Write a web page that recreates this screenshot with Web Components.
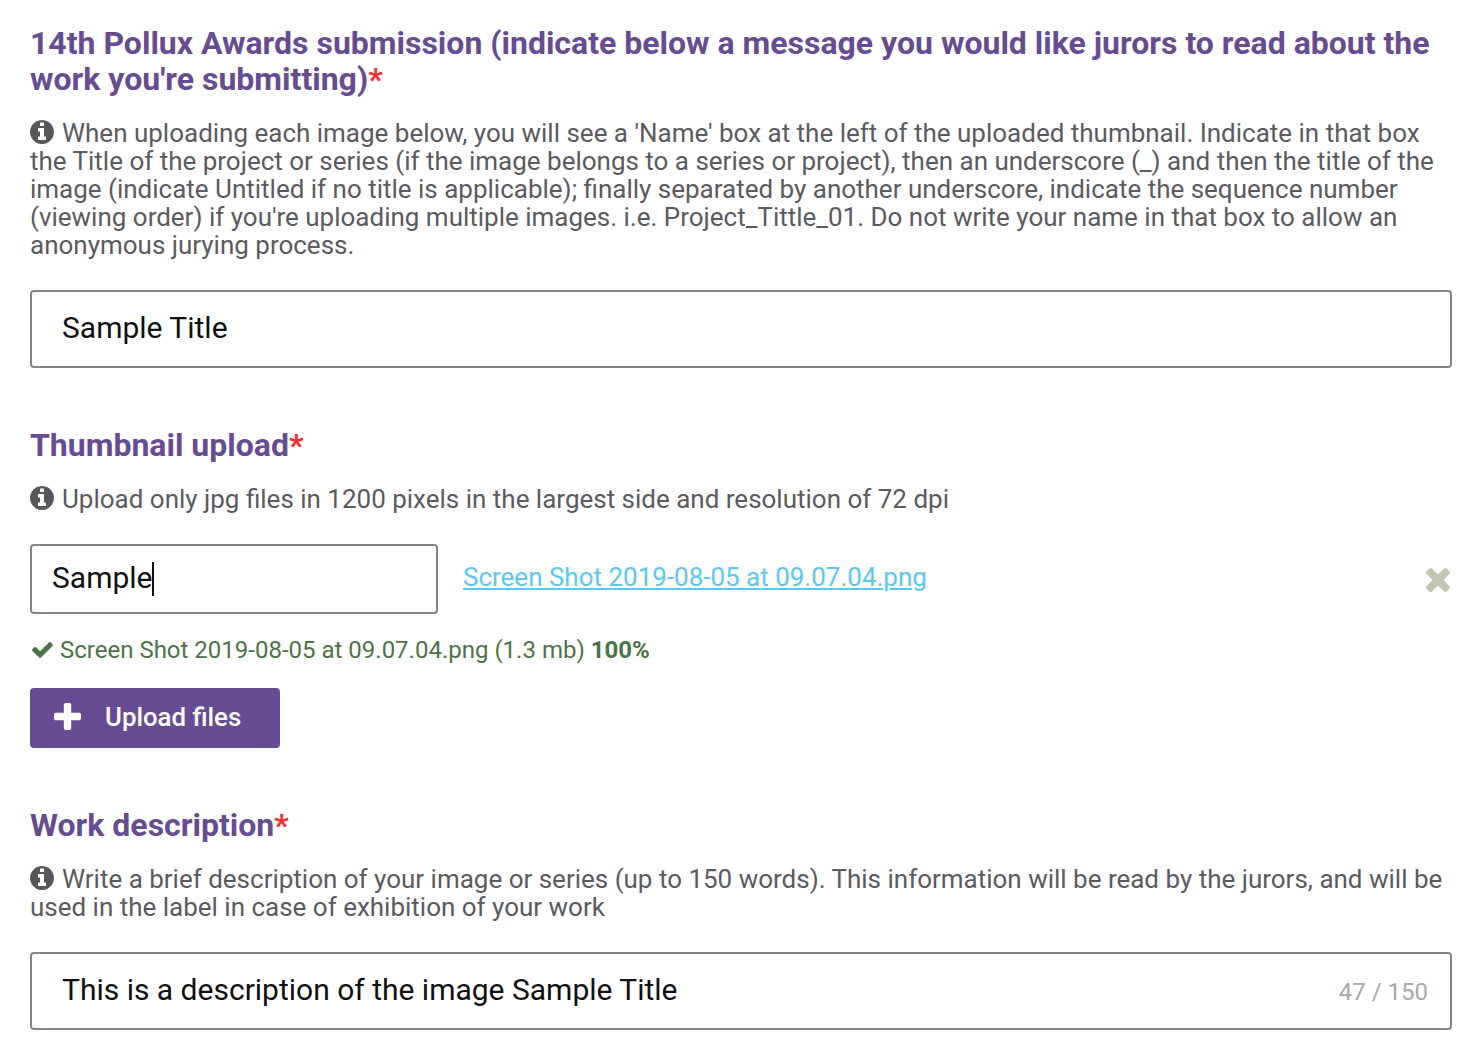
<!DOCTYPE html>
<html lang="en">
<head>
<meta charset="utf-8">
<title>Pollux Awards submission</title>
<style>
  html, body { margin: 0; background: #fff; }
  body { font-family: Roboto, sans-serif; }
  submission-form { padding: 24px 32px 0 30px; }
</style>
</head>
<body>
<template id="field-heading-tpl">
  <style>
    :host { display: block; padding-top: 1px; color: #674c93; font: 700 32px/36px Roboto, sans-serif; }
    .req { color: #f5302e; }
  </style>
  <slot></slot><span class="req">*</span>
</template>

<template id="hint-text-tpl">
  <style>
    :host { display: block; color: #5b5b5f; font: 400 25.99px/28px Roboto, sans-serif; }
    svg { width: 24px; height: 24px; fill: #58585a; vertical-align: -2px; margin-right: 8px; }
  </style>
  <svg viewBox="128 128 1536 1536"><path d="M1152 1376v-160q0-14-9-23t-23-9h-96v-512q0-14-9-23t-23-9h-320q-14 0-23 9t-9 23v160q0 14 9 23t23 9h96v320h-96q-14 0-23 9t-9 23v160q0 14 9 23t23 9h448q14 0 23-9t9-23zm-128-896v-160q0-14-9-23t-23-9h-192q-14 0-23 9t-9 23v160q0 14 9 23t23 9h192q14 0 23-9t9-23zm640 416q0 209-103 385.5t-279.5 279.5-385.5 103-385.5-103-279.5-279.5-103-385.5 103-385.5 279.5-279.5 385.5-103 385.5 103 279.5 279.5 103 385.5z"/></svg><slot></slot>
</template>

<template id="text-box-tpl">
  <style>
    :host { display: flex; align-items: center; justify-content: space-between; box-sizing: border-box; height: 78px; padding: 0 22px 2px 30px; border: 2px solid #808589; border-radius: 4px; background: #fff; color: #111; font: 400 30px/36px Roboto, sans-serif; }
    .count { color: #a9a9a9; font-size: 24px; margin-top: 4px; }
  </style>
  <span><slot></slot></span><span class="count"><slot name="count"></slot></span>
</template>

<template id="file-row-tpl">
  <style>
    :host { display: flex; align-items: center; }
    .name { box-sizing: border-box; flex: 0 0 408px; height: 70px; display: flex; align-items: center; padding: 0 20px 2px; border: 2px solid #808589; border-radius: 4px; color: #111; font: 400 30px/36px Roboto, sans-serif; }
    .caret { width: 2px; height: 34px; background: #111; margin: 2px 0 0 -1px; }
    a { flex: 1; margin-left: 25px; margin-top: -4px; color: #5bc8f2; font: 400 25.99px/32px Roboto, sans-serif; text-decoration: underline; }
    svg { width: 24px; height: 24px; fill: #c4c5b3; margin: 2px 2px 0 0; }
  </style>
  <div class="name"><slot name="value"></slot><span class="caret"></span></div>
  <a href="#"><slot></slot></a>
  <svg viewBox="302 366 1188 1188"><path d="M1490 1322q0 40-28 68l-136 136q-28 28-68 28t-68-28l-294-294-294 294q-28 28-68 28t-68-28l-136-136q-28-28-28-68t28-68l294-294-294-294q-28-28-28-68t28-68l136-136q28-28 68-28t68 28l294 294 294-294q28-28 68-28t68 28l136 136q28 28 28 68t-28 68l-294 294 294 294q28 28 28 68z"/></svg>
</template>

<template id="upload-status-tpl">
  <style>
    :host { display: block; color: #4b7545; font: 400 24px/28px Roboto, sans-serif; }
    svg { width: 21px; height: 16px; fill: #4b7545; margin-right: 7px; margin-left: 2px; }
    b { font-weight: 700; }
  </style>
  <svg viewBox="121 334 1550 1188"><path d="M1671 566q0 40-28 68l-724 724-136 136q-28 28-68 28t-68-28l-136-136-362-362q-28-28-28-68t28-68l136-136q28-28 68-28t68 28l294 295 656-657q28-28 68-28t68 28l136 136q28 28 28 68z"/></svg><slot></slot> <b><slot name="percent"></slot></b>
</template>

<template id="upload-button-tpl">
  <style>
    :host { display: flex; align-items: center; box-sizing: border-box; width: 250px; height: 60px; padding: 0 0 2px 24px; border-radius: 4px; background: #674c93; color: #fff; font: 500 25.8px/32px Roboto, sans-serif; }
    svg { width: 27px; height: 27px; fill: #fff; margin: -1px 24px 0 0; }
  </style>
  <svg viewBox="192 128 1408 1408"><path d="M1600 736v192q0 40-28 68t-68 28h-416v416q0 40-28 68t-68 28h-192q-40 0-68-28t-28-68v-416h-416q-40 0-68-28t-28-68v-192q0-40 28-68t68-28h416v-416q0-40 28-68t68-28h192q40 0 68 28t28 68v416h416q40 0 68 28t28 68z"/></svg><slot></slot>
</template>

<template id="submission-form-tpl">
  <style>
    :host { display: block; }
    ::slotted(field-heading) { margin-bottom: 22px; }
    ::slotted(hint-text) { margin-bottom: 31px; }
    ::slotted(text-box) { margin-bottom: 58px; }
    ::slotted(file-row) { margin-bottom: 22px; }
    ::slotted(upload-status) { margin-bottom: 24px; }
    ::slotted(upload-button) { margin-bottom: 58px; }
  </style>
  <slot></slot>
</template>

<submission-form>
  <field-heading>14th Pollux Awards submission (indicate below a message you would like jurors to read about the<br>work you're submitting)</field-heading>
  <hint-text>When uploading each image below, you will see a 'Name' box at the left of the uploaded thumbnail. Indicate in that box the Title of the project or series (if the image belongs to a series or project), then an underscore (_) and then the title of the image (indicate Untitled if no title is applicable); finally separated by another underscore, indicate the sequence number (viewing order) if you're uploading multiple images. i.e. Project_Tittle_01. Do not write your name in that box to allow an anonymous jurying process.</hint-text>
  <text-box>Sample Title</text-box>

  <field-heading>Thumbnail upload</field-heading>
  <hint-text>Upload only jpg files in 1200 pixels in the largest side and resolution of 72 dpi</hint-text>
  <file-row><span slot="value">Sample</span>Screen Shot 2019-08-05 at 09.07.04.png</file-row>
  <upload-status>Screen Shot 2019-08-05 at 09.07.04.png (1.3 mb) <span slot="percent">100%</span></upload-status>
  <upload-button>Upload files</upload-button>

  <field-heading>Work description</field-heading>
  <hint-text>Write a brief description of your image or series (up to 150 words). This information will be read by the jurors, and will be used in the label in case of exhibition of your work</hint-text>
  <text-box>This is a description of the image Sample Title<span slot="count">47 / 150</span></text-box>
</submission-form>

<script>
  // every element just clones its template into an open shadow root
  const names = ['field-heading', 'hint-text', 'text-box', 'file-row', 'upload-status', 'upload-button', 'submission-form'];
  for (const name of names) {
    customElements.define(name, class extends HTMLElement {
      constructor() {
        super();
        const tpl = document.getElementById(name + '-tpl');
        this.attachShadow({ mode: 'open' }).appendChild(tpl.content.cloneNode(true));
      }
    });
  }
</script>
</body>
</html>
